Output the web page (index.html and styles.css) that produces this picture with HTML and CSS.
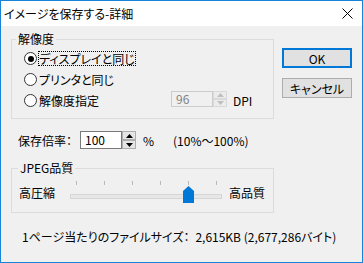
FILE: index.html
```html
<!DOCTYPE html>
<html lang="ja">
<head>
    <meta charset="UTF-8">
    <meta name="viewport" content="width=device-width, initial-scale=1.0">
    <title>イメージを保存する-詳細</title>
    <link rel="stylesheet" href="styles.css">
</head>
<body>
    <div class="window">
        <div class="titlebar">
            <span class="title">イメージを保存する-詳細</span>
            <svg class="close" width="11" height="11" viewBox="0 0 11 11">
                <path d="M0.5 0.5L10.5 10.5M10.5 0.5L0.5 10.5" stroke="#000" stroke-width="1" fill="none"/>
            </svg>
        </div>

        <div class="client">
            <div class="main">
                <div class="left">
                    <fieldset class="group res-group">
                        <legend>解像度</legend>
                        <div class="radio-row">
                            <span class="radio checked"></span>
                            <span class="radio-label focused">ディスプレイと同じ</span>
                        </div>
                        <div class="radio-row">
                            <span class="radio"></span>
                            <span class="radio-label">プリンタと同じ</span>
                        </div>
                        <div class="radio-row">
                            <span class="radio"></span>
                            <span class="radio-label wide">解像度指定</span>
                            <div class="spin disabled">
                                <span class="spin-value">96</span>
                                <span class="spin-btns">
                                    <span class="spin-btn"><svg width="7" height="4" viewBox="0 0 7 4"><path d="M3.5 0L7 4H0Z"/></svg></span>
                                    <span class="spin-btn"><svg width="7" height="4" viewBox="0 0 7 4"><path d="M0 0H7L3.5 4Z"/></svg></span>
                                </span>
                            </div>
                            <span class="unit">DPI</span>
                        </div>
                    </fieldset>

                    <div class="scale-row">
                        <span class="scale-label">保存倍率：</span>
                        <div class="spin">
                            <span class="spin-value">100</span>
                            <span class="spin-btns">
                                <span class="spin-btn"><svg width="7" height="4" viewBox="0 0 7 4"><path d="M3.5 0L7 4H0Z"/></svg></span>
                                <span class="spin-btn"><svg width="7" height="4" viewBox="0 0 7 4"><path d="M0 0H7L3.5 4Z"/></svg></span>
                            </span>
                        </div>
                        <span class="pct">%</span>
                        <span class="range">(10%～100%)</span>
                    </div>

                    <fieldset class="group jpeg-group">
                        <legend>JPEG品質</legend>
                        <div class="slider-row">
                            <span class="end-label low">高圧縮</span>
                            <div class="slider">
                                <div class="ticks">
                                    <span></span><span></span><span></span>
                                    <span></span><span></span><span></span>
                                </div>
                                <div class="track"></div>
                                <svg class="thumb" width="11" height="17" viewBox="0 0 11 17">
                                    <path d="M0 5L5.5 0L11 5V17H0Z" fill="#0078d7"/>
                                </svg>
                            </div>
                            <span class="end-label high">高品質</span>
                        </div>
                    </fieldset>
                </div>

                <div class="buttons">
                    <button class="btn default">OK</button>
                    <button class="btn">キャンセル</button>
                </div>
            </div>

            <p class="filesize">1ページ当たりのファイルサイズ：<span class="size">2,615KB (2,677,286バイト)</span></p>
        </div>
    </div>
</body>
</html>
```

FILE: styles.css
```css
body {
    margin: 0;
    font-family: "Noto Sans CJK JP", "Noto Sans", sans-serif;
    font-size: 12px;
    font-feature-settings: "palt";
    color: #000;
}
.window {
    width: 363px;
    height: 263px;
    box-sizing: border-box;
    border: 1px solid #1883d7;
    background: #f0f0f0;
    display: flex;
    flex-direction: column;
}
.titlebar {
    height: 25px;
    background: #fff;
    display: flex;
    align-items: center;
    justify-content: space-between;
    padding: 0 9px 0 3px;
    line-height: 14px;
}
.client {
    flex: 1;
    padding: 6px 10px 0;
}
.main {
    display: flex;
    gap: 8px;
}
.left {
    width: 263px;
}
.group {
    margin: 0;
    padding: 2px 0 7px 0;
    border: 1px solid #dcdcdc;
    min-width: 0;
}
.group legend {
    padding: 0 2px;
    margin-left: 4px;
    line-height: 14px;
}
.radio-row {
    display: flex;
    align-items: center;
    height: 21px;
    padding-left: 12px;
}
.radio {
    width: 13px;
    height: 13px;
    box-sizing: border-box;
    border: 1px solid #333;
    border-radius: 50%;
    background: #fff;
    display: flex;
    align-items: center;
    justify-content: center;
}
.radio.checked::after {
    content: "";
    width: 6px;
    height: 6px;
    border-radius: 50%;
    background: #000;
}
.radio-label {
    margin-left: 1px;
    border: 1px dotted transparent;
    line-height: 13px;
}
.radio-label.focused {
    border-color: #000;
}
.radio-label.wide {
    width: 131px;
}
.spin {
    display: flex;
    height: 18px;
}
.spin-value {
    width: 42px;
    box-sizing: border-box;
    border: 1px solid #7a7a7a;
    background: #fff;
    padding-left: 4px;
    line-height: 16px;
}
.spin-btns {
    width: 14px;
    display: flex;
    flex-direction: column;
}
.spin-btn {
    flex: 1;
    box-sizing: border-box;
    border: 1px solid #adadad;
    background: #e5e5e5;
    display: flex;
    align-items: center;
    justify-content: center;
}
.spin-btn svg {
    fill: #000;
}
.spin.disabled {
    height: 16px;
    margin-bottom: 3px;
}
.spin.disabled .spin-value {
    border-color: #cccccc;
    background: #f0f0f0;
    color: #838383;
    line-height: 14px;
}
.spin.disabled .spin-btn {
    border-color: #d9d9d9;
    background: #ececec;
}
.spin.disabled .spin-btn svg {
    fill: #bfbfbf;
}
.unit {
    margin-left: 6px;
}
.scale-row {
    display: flex;
    align-items: center;
    height: 18px;
    margin: 12px 0 12px 7px;
}
.scale-label {
    width: 62px;
}
.pct {
    width: 30px;
    margin-left: 7px;
}
.jpeg-group {
    padding: 3px 0 6px 0;
}
.jpeg-group legend {
    margin-left: 6px;
}
.slider-row {
    display: flex;
    align-items: center;
    height: 28px;
    padding-left: 7px;
}
.end-label.low {
    width: 51px;
}
.end-label.high {
    margin-left: 7px;
}
.slider {
    position: relative;
    width: 152px;
    height: 28px;
}
.ticks {
    display: flex;
    justify-content: space-between;
    margin: 3px 5px 0 6px;
    height: 4px;
}
.ticks span {
    width: 1px;
    background: #b9b9b9;
}
.track {
    margin-top: 9px;
    height: 5px;
    box-sizing: border-box;
    border: 1px solid #d6d6d6;
    background: #e7e7e7;
}
.thumb {
    position: absolute;
    left: 113px;
    top: 8px;
}
.buttons {
    width: 70px;
    display: flex;
    flex-direction: column;
    gap: 10px;
    padding-top: 16px;
}
.btn {
    height: 20px;
    box-sizing: border-box;
    border: 1px solid #adadad;
    background: #e1e1e1;
    font: inherit;
    color: #000;
    padding: 0;
}
.btn.default {
    border: 2px solid #0078d7;
}
.filesize {
    margin: 17px 0 0 11px;
    line-height: 14px;
}
.size {
    margin-left: 6px;
}
```
